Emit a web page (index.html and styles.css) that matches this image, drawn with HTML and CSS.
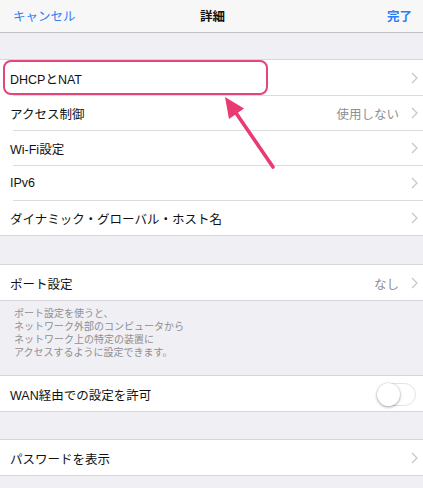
FILE: index.html
```html
<!DOCTYPE html>
<html lang="ja">
<head>
<meta charset="utf-8">
<title>詳細</title>
<link rel="stylesheet" href="styles.css">
</head>
<body>
<div class="page">
  <header class="nav">
    <span class="nav-btn">キャンセル</span>
    <span class="nav-title">詳細</span>
    <span class="nav-btn nav-done">完了</span>
  </header>

  <section class="group first">
    <div class="row"><span class="label">DHCPとNAT</span><span class="chev"><svg width="7" height="12" viewBox="0 0 7 12"><polyline points="1,1 6,6 1,11"/></svg></span></div>
    <div class="row"><span class="label">アクセス制御</span><span class="detail">使用しない</span><span class="chev"><svg width="7" height="12" viewBox="0 0 7 12"><polyline points="1,1 6,6 1,11"/></svg></span></div>
    <div class="row"><span class="label">Wi-Fi設定</span><span class="chev"><svg width="7" height="12" viewBox="0 0 7 12"><polyline points="1,1 6,6 1,11"/></svg></span></div>
    <div class="row"><span class="label">IPv6</span><span class="chev"><svg width="7" height="12" viewBox="0 0 7 12"><polyline points="1,1 6,6 1,11"/></svg></span></div>
    <div class="row"><span class="label">ダイナミック・グローバル・ホスト名</span><span class="chev"><svg width="7" height="12" viewBox="0 0 7 12"><polyline points="1,1 6,6 1,11"/></svg></span></div>
  </section>

  <section class="group">
    <div class="row"><span class="label">ポート設定</span><span class="detail">なし</span><span class="chev"><svg width="7" height="12" viewBox="0 0 7 12"><polyline points="1,1 6,6 1,11"/></svg></span></div>
  </section>
  <p class="footer">ポート設定を使うと、<br>ネットワーク外部のコンピュータから<br>ネットワーク上の特定の装置に<br>アクセスするように設定できます。</p>

  <section class="group after-footer">
    <div class="row"><span class="label">WAN経由での設定を許可</span><span class="toggle"><span class="knob"></span></span></div>
  </section>

  <section class="group gap">
    <div class="row"><span class="label">パスワードを表示</span><span class="chev"><svg width="7" height="12" viewBox="0 0 7 12"><polyline points="1,1 6,6 1,11"/></svg></span></div>
  </section>

  <div class="highlight"></div>
  <svg class="arrow" width="423" height="488" viewBox="0 0 423 488">
    <line x1="273" y1="167" x2="236" y2="113" stroke="#e93a72" stroke-width="3.6" stroke-linecap="round"/>
    <polygon points="225,97 244,108.5 229,119" fill="#e93a72"/>
  </svg>
</div>
</body>
</html>
```
FILE: styles.css
```css
* { box-sizing: border-box; }
html, body { margin: 0; padding: 0; }
body {
  background: #efeff4;
  font-family: "Liberation Sans", "Noto Sans CJK JP", sans-serif;
  color: #111;
  width: 423px;
  height: 488px;
  overflow: hidden;
}
.page { position: relative; height: 488px; }

.nav {
  height: 33px;
  background: #f7f7f8;
  border-bottom: 1px solid #c2c2c6;
  display: flex;
  align-items: center;
  justify-content: space-between;
  padding: 0 11px 1px 13px;
  font-size: 12.5px;
}
.nav-btn { color: #2f7df6; width: 70px; }
.nav-done { text-align: right; font-weight: bold; }
.nav-title { font-weight: 600; color: #111; }

.group {
  background: #fff;
  border-top: 1px solid #d6d6da;
  border-bottom: 1px solid #d6d6da;
  margin-top: 28px;
}
.group.first { margin-top: 26px; }
.group.gap { margin-top: 27px; }
.group.after-footer { margin-top: 0; }

.row {
  height: 35px;
  display: flex;
  align-items: center;
  padding: 1px 4px 0 10px;
  font-size: 12.5px;
}
.row + .row {
  background: linear-gradient(#dcdce0, #dcdce0) no-repeat 13px 0 / calc(100% - 13px) 1px;
}
.label { flex: 1; white-space: nowrap; }
.detail { color: #8e8e93; margin-right: 12px; }
.chev { display: flex; align-items: center; width: 8px; }
.chev svg polyline { fill: none; stroke: #c7c7cc; stroke-width: 1.3; }

.footer {
  margin: 0;
  padding: 6px 14px 16px;
  font-size: 10px;
  line-height: 13px;
  color: #8e8e93;
}

.toggle {
  width: 39px;
  height: 23px;
  border-radius: 12px;
  border: 1px solid #e3e3e6;
  background: #fff;
  position: relative;
  margin-right: 3px;
}
.knob {
  position: absolute;
  left: -1px;
  top: -1px;
  width: 23px;
  height: 23px;
  border-radius: 50%;
  background: #fff;
  box-shadow: 0 1px 3px rgba(0,0,0,0.35), 0 0 0 0.5px rgba(0,0,0,0.08);
}

.highlight {
  position: absolute;
  left: 3px;
  top: 60px;
  width: 265px;
  height: 35px;
  border: 2px solid #e2467a;
  border-radius: 8px;
}
.arrow { position: absolute; left: 0; top: 0; pointer-events: none; }
```
